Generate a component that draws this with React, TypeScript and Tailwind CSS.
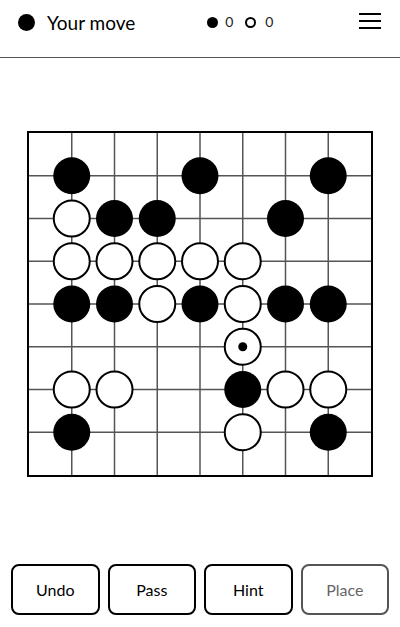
import React from "react";

type S = "b" | "w" | "wm";

const stones: [number, number, S][] = [
  [1, 1, "b"], [4, 1, "b"], [7, 1, "b"],
  [1, 2, "w"], [2, 2, "b"], [3, 2, "b"], [6, 2, "b"],
  [1, 3, "w"], [2, 3, "w"], [3, 3, "w"], [4, 3, "w"], [5, 3, "w"],
  [1, 4, "b"], [2, 4, "b"], [3, 4, "w"], [4, 4, "b"], [5, 4, "w"], [6, 4, "b"], [7, 4, "b"],
  [5, 5, "wm"],
  [1, 6, "w"], [2, 6, "w"], [5, 6, "b"], [6, 6, "w"], [7, 6, "w"],
  [1, 7, "b"], [5, 7, "w"], [7, 7, "b"],
];

const STEP = 342 / 8;

function Board() {
  const lines = [1, 2, 3, 4, 5, 6, 7].map((i) => i * STEP);
  return (
    <div className="w-[346px] h-[346px] border-2 border-black bg-white">
      <svg width="342" height="342" viewBox="0 0 342 342" className="block">
        {lines.map((p, i) => (
          <g key={i}>
            <line x1={p} y1={0} x2={p} y2={342} stroke="#555" strokeWidth={1.5} />
            <line x1={0} y1={p} x2={342} y2={p} stroke="#555" strokeWidth={1.5} />
          </g>
        ))}
        {stones.map(([c, r, s], i) => {
          const cx = c * STEP;
          const cy = r * STEP;
          if (s === "b") return <circle key={i} cx={cx} cy={cy} r={18.5} fill="#000" />;
          return (
            <g key={i}>
              <circle cx={cx} cy={cy} r={18} fill="#fff" stroke="#000" strokeWidth={2} />
              {s === "wm" && <circle cx={cx} cy={cy} r={4.5} fill="#000" />}
            </g>
          );
        })}
      </svg>
    </div>
  );
}

export default function App() {
  return (
    <div
      className="w-[400px] h-[627px] bg-white flex flex-col text-black"
      style={{ fontFamily: "Lato, 'Noto Sans', sans-serif" }}
    >
      <header className="h-[58px] shrink-0 flex items-start border-b-[1.5px] border-[#555] pl-[18px] pr-[19px] pt-[12px]">
        <div className="flex items-center h-[20px]">
          <span className="w-[17px] h-[17px] rounded-full bg-black" />
          <span className="ml-[12px] text-[19px] leading-none">Your move</span>
        </div>
        <div className="flex items-center h-[20px] ml-[72px] text-[14px] leading-none text-[#222]">
          <span className="w-[11px] h-[11px] rounded-full bg-black" />
          <span className="ml-[7px]">0</span>
          <span className="ml-[12px] w-[11px] h-[11px] rounded-full border-2 border-black" />
          <span className="ml-[9px]">0</span>
        </div>
        <button className="ml-auto mt-[1px] flex flex-col gap-[5px] w-[22px]" aria-label="menu">
          <span className="block h-[2px] w-[22px] bg-black" />
          <span className="block h-[2px] w-[22px] bg-black" />
          <span className="block h-[2px] w-[22px] bg-black" />
        </button>
      </header>
      <main className="flex justify-center mt-[73px]">
        <Board />
      </main>
      <div className="mt-auto mb-[12px] px-[11px] flex gap-[8px]">
        {["Undo", "Pass", "Hint"].map((t) => (
          <button
            key={t}
            className="flex-1 h-[51px] border-2 border-black rounded-[8px] text-[16px] text-black bg-white"
          >
            {t}
          </button>
        ))}
        <button className="flex-1 h-[51px] border-2 border-[#555] rounded-[8px] text-[16px] text-[#666] bg-white">
          Place
        </button>
      </div>
    </div>
  );
}
